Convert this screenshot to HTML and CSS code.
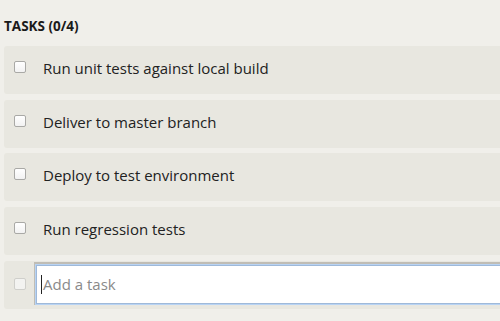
FILE: index.html
```html
<!DOCTYPE html>
<html lang="en">
<head>
  <meta charset="UTF-8">
  <meta name="viewport" content="width=device-width, initial-scale=1.0">
  <link rel="stylesheet" href="styles.css">
</head>
<body>

<div class="tasks">
  <h2 class="tasks-title">Tasks (0/4)</h2>

  <div class="task-row">
    <input type="checkbox" class="task-check">
    <span class="task-name">Run unit tests against local build</span>
  </div>
  <div class="task-row">
    <input type="checkbox" class="task-check">
    <span class="task-name">Deliver to master branch</span>
  </div>
  <div class="task-row">
    <input type="checkbox" class="task-check">
    <span class="task-name">Deploy to test environment</span>
  </div>
  <div class="task-row">
    <input type="checkbox" class="task-check">
    <span class="task-name">Run regression tests</span>
  </div>
  <div class="task-row new-task">
    <input type="checkbox" class="task-check" disabled>
    <div class="task-input"><span class="caret"></span>Add a task</div>
  </div>
</div>

</body>
</html>
```

FILE: styles.css
```css
body {
  background-color: #f0efea;
  margin: 0;
  font-family: 'Open Sans', sans-serif;
  color: #222;
}

.tasks {
  padding: 18px 0 0 4px;
}

.tasks-title {
  margin: 0 0 11px 0;
  font-size: 13.5px;
  font-weight: bold;
  text-transform: uppercase;
  line-height: 17px;
  color: #1a1a1a;
}

.task-row {
  display: flex;
  align-items: center;
  height: 48px;
  margin-bottom: 5.7px;
  padding-left: 10px;
  background-color: #e8e7e0;
  border-radius: 3px 0 0 3px;
}

.task-check {
  appearance: none;
  -webkit-appearance: none;
  width: 12px;
  height: 12px;
  margin: -6px 17px 0 0;
  border: 1px solid #a9a9a6;
  border-radius: 2px;
  background: linear-gradient(#ffffff, #f2f2f2);
  box-sizing: border-box;
}

.task-check:disabled {
  border-color: #cfcfcb;
  background: #f3f3f1;
}

.task-name {
  font-size: 15px;
  margin-top: -4px;
}

.new-task {
  align-items: flex-start;
  padding-top: 4px;
  box-sizing: border-box;
}

.new-task .task-check {
  margin: 13px 10px 0 0;
}

.task-input {
  flex: 1;
  height: 39px;
  box-sizing: border-box;
  display: flex;
  align-items: center;
  padding-left: 4px;
  background-color: #fff;
  border: 1px solid #9fb9d9;
  border-right: none;
  box-shadow: 0 0 0 1px #b8d3f3, 0 -1px 0 2px #c0bdb5;
  font-size: 15px;
  color: #8a8a8a;
}

.caret {
  width: 1px;
  height: 19px;
  background-color: #222;
  margin-right: 1px;
}
```
